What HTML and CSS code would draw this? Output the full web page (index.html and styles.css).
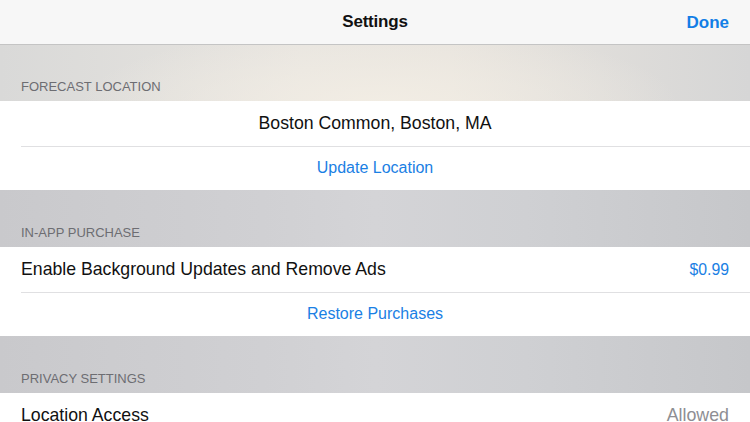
FILE: index.html
```html
<!DOCTYPE html>
<html>
<head>
<meta charset="utf-8">
<link rel="stylesheet" href="styles.css">
</head>
<body>
<div class="sheet">
  <header class="navbar">
    <div class="nav-title">Settings</div>
    <div class="nav-done">Done</div>
  </header>
  <section class="group">
    <div class="group-header warm">FORECAST LOCATION</div>
    <div class="cell center big">Boston Common, Boston, MA</div>
    <div class="cell center action sep">Update Location</div>
  </section>
  <section class="group">
    <div class="group-header">IN-APP PURCHASE</div>
    <div class="cell row">
      <span class="label">Enable Background Updates and Remove Ads</span>
      <span class="value blue">$0.99</span>
    </div>
    <div class="cell center action sep">Restore Purchases</div>
  </section>
  <section class="group">
    <div class="group-header">PRIVACY SETTINGS</div>
    <div class="cell row">
      <span class="label">Location Access</span>
      <span class="value gray">Allowed</span>
    </div>
  </section>
</div>
</body>
</html>
```
FILE: styles.css
```css
* { box-sizing: border-box; }
html, body { margin: 0; padding: 0; }
body {
  width: 750px;
  height: 422px;
  overflow: hidden;
  font-family: "Liberation Sans", Arial, sans-serif;
  background: #c8c9cc;
  -webkit-font-smoothing: antialiased;
}
.sheet { display: flex; flex-direction: column; }
.navbar {
  height: 45px;
  background: #f7f7f7;
  border-bottom: 1px solid #c4c4c4;
  display: flex;
  align-items: center;
  justify-content: center;
  position: relative;
}
.nav-title {
  font-size: 17px;
  font-weight: bold;
  color: #111;
  letter-spacing: -0.2px;
}
.nav-done {
  position: absolute;
  right: 21px;
  top: 13px;
  font-size: 17px;
  font-weight: bold;
  color: #127ee6;
}
.group-header {
  height: 57px;
  display: flex;
  align-items: flex-end;
  padding: 0 21px 7px;
  font-size: 13px;
  color: #6d6d72;
  background: linear-gradient(90deg, #c9c9cc 0%, #d0d0d3 35%, #d4d4d7 50%, #cfd0d3 70%, #c6c7ca 100%);
}
.group-header.warm {
  height: 56px;
  background:
    radial-gradient(ellipse 300px 80px at 380px 60px, #f2ede4 0%, rgba(240,235,226,0) 100%),
    linear-gradient(90deg, #d9d9d8 0%, #e8e5e0 40%, #e8e4de 60%, #d6d6d6 100%);
}
.cell {
  background: #fff;
  height: 45px;
  display: flex;
  align-items: center;
  position: relative;
}
.cell.sep::before {
  content: "";
  position: absolute;
  top: 0;
  left: 21px;
  right: 0;
  height: 1px;
  background: #e0e0e2;
}
.center { justify-content: center; }
.big { font-size: 17.7px; color: #111; }
.action { font-size: 16px; color: #1a80e4; height: 44px; }
.row { justify-content: space-between; padding: 0 21px; }
.label { font-size: 17.7px; color: #111; }
.value { font-size: 15.8px; }
.blue { color: #1a80e4; }
.gray { color: #8e8e93; font-size: 17.8px; }
```
